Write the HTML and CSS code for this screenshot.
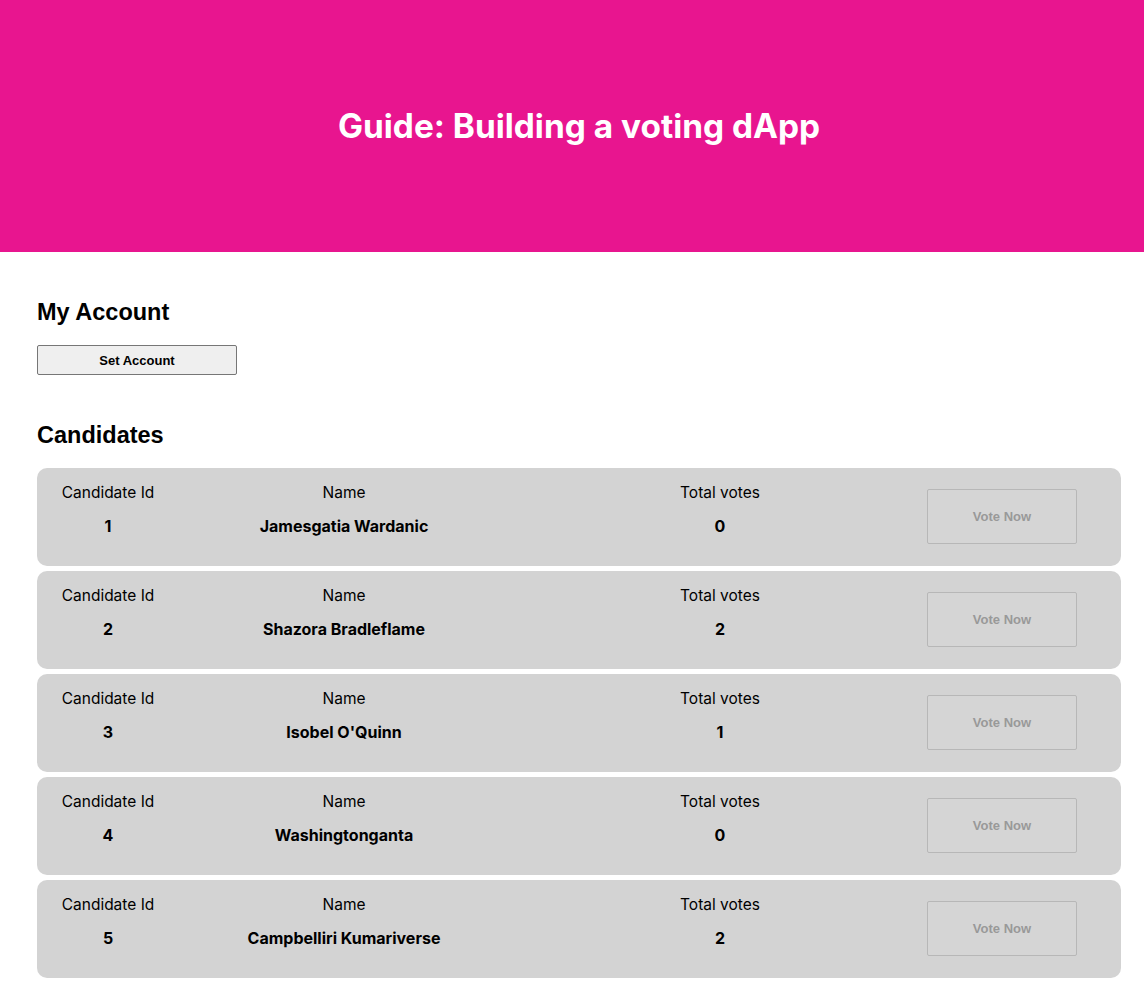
FILE: index.html
```html
<!DOCTYPE html>
<html lang="en">
<head>
<meta charset="utf-8">
<title>Guide: Building a voting dAapp</title>
<link rel="stylesheet" href="styles.css">
</head>
<body>
<header class="hero">
  <h1 class="hero-title">Guide: Building a voting dApp</h1>
</header>
<main class="content">
  <section class="account">
    <h2 class="section-title">My Account</h2>
    <button class="set-account" type="button">Set Account</button>
  </section>
  <section class="candidates">
    <h2 class="section-title">Candidates</h2>
    <div class="candidate-list">
      <div class="candidate">
        <div class="col"><div class="label">Candidate Id</div><div class="value">1</div></div>
        <div class="col"><div class="label">Name</div><div class="value">Jamesgatia Wardanic</div></div>
        <div class="col col-votes"><div class="label">Total votes</div><div class="value">0</div></div>
        <div class="col-btn"><button class="vote" type="button" disabled>Vote Now</button></div>
      </div>
      <div class="candidate">
        <div class="col"><div class="label">Candidate Id</div><div class="value">2</div></div>
        <div class="col"><div class="label">Name</div><div class="value">Shazora Bradleflame</div></div>
        <div class="col col-votes"><div class="label">Total votes</div><div class="value">2</div></div>
        <div class="col-btn"><button class="vote" type="button" disabled>Vote Now</button></div>
      </div>
      <div class="candidate">
        <div class="col"><div class="label">Candidate Id</div><div class="value">3</div></div>
        <div class="col"><div class="label">Name</div><div class="value">Isobel O'Quinn</div></div>
        <div class="col col-votes"><div class="label">Total votes</div><div class="value">1</div></div>
        <div class="col-btn"><button class="vote" type="button" disabled>Vote Now</button></div>
      </div>
      <div class="candidate">
        <div class="col"><div class="label">Candidate Id</div><div class="value">4</div></div>
        <div class="col"><div class="label">Name</div><div class="value">Washingtonganta</div></div>
        <div class="col col-votes"><div class="label">Total votes</div><div class="value">0</div></div>
        <div class="col-btn"><button class="vote" type="button" disabled>Vote Now</button></div>
      </div>
      <div class="candidate">
        <div class="col"><div class="label">Candidate Id</div><div class="value">5</div></div>
        <div class="col"><div class="label">Name</div><div class="value">Campbelliri Kumariverse</div></div>
        <div class="col col-votes"><div class="label">Total votes</div><div class="value">2</div></div>
        <div class="col-btn"><button class="vote" type="button" disabled>Vote Now</button></div>
      </div>
    </div>
  </section>
</main>
</body>
</html>
```

FILE: styles.css
```css
html, body {
  margin: 0;
  padding: 0;
  background: #ffffff;
}

body {
  font-family: Inter, "Noto Sans", sans-serif;
  color: #000000;
}

.hero {
  height: 252px;
  background: #e8158f;
  display: flex;
  align-items: center;
  justify-content: center;
  padding-left: 14px;
}

.hero-title {
  margin: 0;
  color: #ffffff;
  font-family: Inter, sans-serif;
  font-weight: 700;
  font-size: 33.4px;
  line-height: 40px;
}

.content {
  padding: 0 23px 40px 37px;
}

.section-title {
  margin: 46px 0 18px;
  font-family: "Liberation Sans", Arial, sans-serif;
  font-weight: 700;
  font-size: 23.5px;
  line-height: 29px;
}

.set-account {
  display: block;
  width: 200px;
  height: 30px;
  padding: 0;
  background: #efefef;
  border: 1px solid #767676;
  border-radius: 2px;
  font-family: "Liberation Sans", Arial, sans-serif;
  font-weight: 700;
  font-size: 13px;
  color: #000000;
}

.candidate-list {
  display: flex;
  flex-direction: column;
  gap: 5px;
}

.candidate {
  display: grid;
  grid-template-columns: 142px 330px 419px 150px;
  height: 98px;
  box-sizing: border-box;
  background: #d3d3d3;
  border-radius: 10px;
}

.col {
  text-align: center;
  padding-top: 15px;
}

.col-votes {
  padding-left: 3px;
}

.label {
  font-size: 15.5px;
  line-height: 19px;
  font-weight: 400;
}

.value {
  margin-top: 15px;
  font-size: 16px;
  line-height: 19px;
  font-weight: 700;
}

.col-btn {
  display: flex;
  align-items: flex-start;
  padding-top: 21px;
}

.vote {
  width: 150px;
  height: 55px;
  padding: 0;
  margin-left: -1px;
  background: #d5d5d5;
  border: 1px solid #b7b7b7;
  border-radius: 2px;
  font-family: "Liberation Sans", Arial, sans-serif;
  font-weight: 700;
  font-size: 13px;
  color: #999999;
}
```
